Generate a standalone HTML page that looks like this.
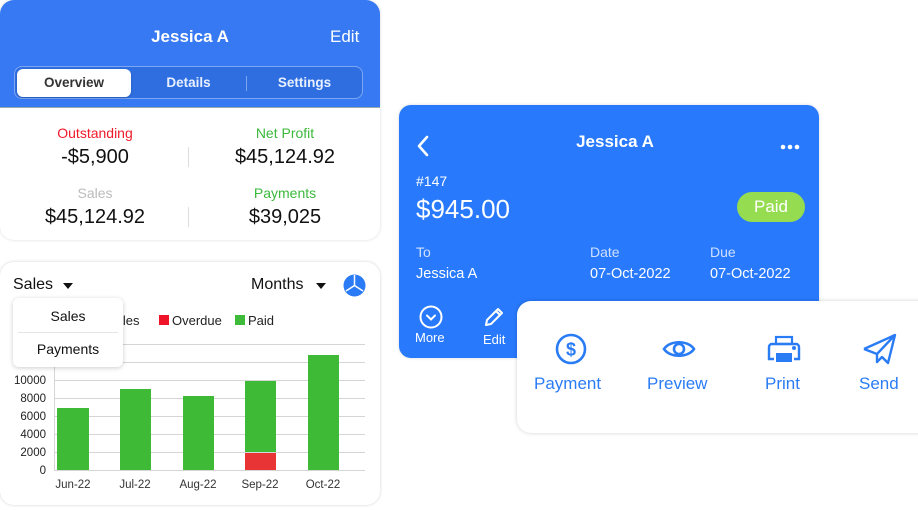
<!DOCTYPE html>
<html><head><meta charset="utf-8">
<style>
*{margin:0;padding:0;box-sizing:border-box}
body{width:918px;height:510px;background:#fff;font-family:"Liberation Sans",sans-serif;position:relative;overflow:hidden}
.abs{position:absolute}
.c{text-align:center}
</style></head><body>

<!-- Top-left card -->
<div class="abs" style="left:0;top:0;width:380px;height:240px;border-radius:14px;box-shadow:0 0 3px rgba(0,0,0,.15);overflow:hidden;background:#fff">
  <div class="abs" style="left:0;top:0;width:380px;height:108px;background:#3679f2;border-bottom:1px solid #9aa">
    <div class="abs c" style="left:0;width:380px;top:27px;color:#fff;font-size:17px;font-weight:bold">Jessica A</div>
    <div class="abs" style="left:330px;top:27px;color:#fff;font-size:17px">Edit</div>
    <div class="abs" style="left:14px;top:66px;width:349px;height:33px;border-radius:8px;background:#2e6ee0;border:1px solid #7da6f3"></div>
    <div class="abs c" style="left:17px;top:69px;width:114px;height:28px;border-radius:6px;background:#fff;color:#333;font-size:13.5px;font-weight:bold;line-height:28px;box-shadow:0 1px 2px rgba(0,0,0,.2)">Overview</div>
    <div class="abs c" style="left:131px;top:69px;width:115px;line-height:28px;color:#e8f0ff;font-size:13.5px;font-weight:bold">Details</div>
    <div class="abs" style="left:246px;top:76px;width:1px;height:15px;background:#7da6f3"></div>
    <div class="abs c" style="left:247px;top:69px;width:115px;line-height:28px;color:#e8f0ff;font-size:13.5px;font-weight:bold">Settings</div>
  </div>
  <div class="abs c" style="left:0;width:190px;top:125px;color:#f01a2a;font-size:14px">Outstanding</div>
  <div class="abs c" style="left:0;width:190px;top:146px;color:#111;font-size:20px">-$5,900</div>
  <div class="abs c" style="left:190px;width:190px;top:125px;color:#3cb83c;font-size:14px">Net Profit</div>
  <div class="abs c" style="left:190px;width:190px;top:146px;color:#111;font-size:20px">$45,124.92</div>
  <div class="abs" style="left:188px;top:147px;width:1px;height:20px;background:#ddd"></div>
  <div class="abs c" style="left:0;width:190px;top:185px;color:#bbb;font-size:14px">Sales</div>
  <div class="abs c" style="left:0;width:190px;top:206px;color:#111;font-size:20px">$45,124.92</div>
  <div class="abs c" style="left:190px;width:190px;top:185px;color:#3cb83c;font-size:14px">Payments</div>
  <div class="abs c" style="left:190px;width:190px;top:206px;color:#111;font-size:20px">$39,025</div>
  <div class="abs" style="left:188px;top:207px;width:1px;height:20px;background:#ddd"></div>
</div>

<!-- Chart card -->
<div class="abs" style="left:0;top:262px;width:380px;height:243px;border-radius:14px;box-shadow:0 0 3px rgba(0,0,0,.18);background:#fff">
  <div class="abs" style="left:13px;top:14px;font-size:16px;color:#111">Sales</div>
  <svg class="abs" style="left:62px;top:20px" width="12" height="8"><path d="M1 1h10L6 7z" fill="#111"/></svg>
  <div class="abs" style="left:251px;top:14px;font-size:16px;color:#111">Months</div>
  <svg class="abs" style="left:315px;top:20px" width="12" height="8"><path d="M1 1h10L6 7z" fill="#111"/></svg>
  <svg class="abs" style="left:343px;top:12px" width="23" height="23"><circle cx="11.5" cy="11.5" r="11" fill="#2a7bf5"/><path d="M11.5 11.5V1M11.5 11.5L3 17M11.5 11.5L20 17" stroke="#fff" stroke-width="1.5"/></svg>
</div>

<svg class="abs" style="left:0;top:300px" width="380" height="200" font-family="Liberation Sans, sans-serif">
  <text x="107" y="25" font-size="13" fill="#222">Sales</text>
  <rect x="159" y="15" width="10" height="10" fill="#f0142a"/>
  <text x="172" y="25" font-size="13" fill="#222">Overdue</text>
  <rect x="235" y="15" width="10" height="10" fill="#3cba38"/>
  <text x="248" y="25" font-size="13" fill="#222">Paid</text>
  <g stroke="#d5d5d5" stroke-width="1">
    <line x1="54" x2="365" y1="44.5" y2="44.5"/><line x1="54" x2="365" y1="62.5" y2="62.5"/>
    <line x1="54" x2="365" y1="80.5" y2="80.5"/><line x1="54" x2="365" y1="98.5" y2="98.5"/>
    <line x1="54" x2="365" y1="116.5" y2="116.5"/><line x1="54" x2="365" y1="134.5" y2="134.5"/>
    <line x1="54" x2="365" y1="152.5" y2="152.5"/><line x1="54" x2="365" y1="170.5" y2="170.5"/>
    <line x1="54.5" x2="54.5" y1="44" y2="171"/>
  </g>
  <g font-size="11.5" fill="#222" text-anchor="end">
    <text x="46" y="84">10000</text><text x="46" y="102">8000</text><text x="46" y="120">6000</text>
    <text x="46" y="138">4000</text><text x="46" y="156">2000</text><text x="46" y="174">0</text>
  </g>
  <g fill="#3eba37">
    <rect x="57" y="108" width="32" height="62"/>
    <rect x="120" y="89" width="31" height="81"/>
    <rect x="183" y="96" width="31" height="74"/>
    <rect x="245" y="81" width="31" height="71"/>
    <rect x="308" y="55" width="31" height="115"/>
  </g>
  <rect x="245" y="153" width="31" height="17" fill="#e83434"/>
  <g font-size="11.5" fill="#333" text-anchor="middle">
    <text x="73" y="188">Jun-22</text><text x="135" y="188">Jul-22</text><text x="198" y="188">Aug-22</text>
    <text x="260" y="188">Sep-22</text><text x="323" y="188">Oct-22</text>
  </g>
</svg>

<!-- dropdown -->
<div class="abs" style="left:13px;top:298px;width:110px;height:69px;background:#fff;border-radius:6px;box-shadow:0 1px 5px rgba(0,0,0,.2)">
  <div class="abs c" style="left:0;width:110px;top:10px;font-size:14px;color:#111">Sales</div>
  <div class="abs" style="left:5px;top:34px;width:100px;height:1px;background:#e5e5e5"></div>
  <div class="abs c" style="left:0;width:110px;top:43px;font-size:14px;color:#111">Payments</div>
</div>

<!-- Invoice card -->
<div class="abs" style="left:399px;top:105px;width:420px;height:253px;background:#2879fc;border-radius:12px;box-shadow:0 0 3px rgba(0,0,0,.15)">
  <svg class="abs" style="left:17px;top:30px" width="14" height="22"><path d="M11 2L3 11l8 9" stroke="#fff" stroke-width="2.6" fill="none" stroke-linecap="round" stroke-linejoin="round"/></svg>
  <div class="abs c" style="left:0;width:432px;top:27px;font-size:17px;font-weight:bold;color:#fff">Jessica A</div>
  <svg class="abs" style="left:381px;top:39px" width="20" height="6"><circle cx="3" cy="3" r="2.3" fill="#fff"/><circle cx="10" cy="3" r="2.3" fill="#fff"/><circle cx="17" cy="3" r="2.3" fill="#fff"/></svg>
  <div class="abs" style="left:17px;top:68px;font-size:14px;color:#fff">#147</div>
  <div class="abs" style="left:17px;top:89px;font-size:26px;color:#fff">$945.00</div>
  <div class="abs c" style="left:338px;top:87px;width:68px;height:30px;border-radius:15px;background:#95dc50;color:#fff;font-size:17px;line-height:30px">Paid</div>
  <div class="abs" style="left:17px;top:139px;font-size:14px;color:#cfe0ff">To</div>
  <div class="abs" style="left:17px;top:161px;font-size:14.5px;color:#fff">Jessica A</div>
  <div class="abs" style="left:191px;top:139px;font-size:14px;color:#cfe0ff">Date</div>
  <div class="abs" style="left:191px;top:161px;font-size:14.5px;color:#fff">07-Oct-2022</div>
  <div class="abs" style="left:311px;top:139px;font-size:14px;color:#cfe0ff">Due</div>
  <div class="abs" style="left:311px;top:161px;font-size:14.5px;color:#fff">07-Oct-2022</div>
  <svg class="abs" style="left:20px;top:200px" width="24" height="24"><circle cx="12" cy="12" r="10.5" stroke="#fff" stroke-width="2" fill="none"/><path d="M8 10.5l4 4 4-4" stroke="#fff" stroke-width="2" fill="none" stroke-linecap="round"/></svg>
  <div class="abs" style="left:16px;top:225px;font-size:13px;color:#fff">More</div>
  <svg class="abs" style="left:84px;top:200px" width="22" height="24"><path d="M3 20l1-5L15 4l4 4L8 19z M13 6l4 4" stroke="#fff" stroke-width="2" fill="none" stroke-linejoin="round"/></svg>
  <div class="abs" style="left:84px;top:227px;font-size:13px;color:#fff">Edit</div>
</div>

<!-- action card -->
<div class="abs" style="left:517px;top:301px;width:420px;height:132px;background:#fff;border-radius:14px;box-shadow:0 0 4px rgba(0,0,0,.18)">
  <svg class="abs" style="left:38px;top:32px" width="32" height="32"><circle cx="16" cy="16" r="14" stroke="#2a7cf5" stroke-width="2.6" fill="none"/><text x="16" y="22.5" text-anchor="middle" font-size="18" font-weight="bold" fill="#2a7cf5" font-family="Liberation Sans,sans-serif">$</text></svg>
  <div class="abs" style="left:17px;top:73px;font-size:17px;color:#2a7cf5">Payment</div>
  <svg class="abs" style="left:145px;top:35px" width="34" height="26"><path d="M2 13C8 4 26 4 32 13C26 22 8 22 2 13z" stroke="#2a7cf5" stroke-width="2.6" fill="none"/><circle cx="17" cy="13" r="5" stroke="#2a7cf5" stroke-width="2.6" fill="none"/></svg>
  <div class="abs" style="left:130px;top:73px;font-size:17px;color:#2a7cf5">Preview</div>
  <svg class="abs" style="left:249px;top:34px" width="36" height="30"><rect x="10" y="2" width="16" height="7" stroke="#2a7cf5" stroke-width="2.2" fill="none"/><path d="M8 24H3V12a3 3 0 0 1 3-3h24a3 3 0 0 1 3 3v12h-5" stroke="#2a7cf5" stroke-width="2.4" fill="none"/><rect x="10" y="18" width="16" height="9" fill="#2a7cf5"/><circle cx="28" cy="13" r="2" fill="#2a7cf5"/></svg>
  <div class="abs" style="left:248px;top:73px;font-size:17px;color:#2a7cf5">Print</div>
  <svg class="abs" style="left:345px;top:32px" width="36" height="32"><path d="M2 16L33 2L26 30L20 24L15 29L15 21L33 2M15 21L2 16" stroke="#2a7cf5" stroke-width="2.4" fill="none" stroke-linejoin="round"/></svg>
  <div class="abs" style="left:342px;top:73px;font-size:17px;color:#2a7cf5">Send</div>
</div>

</body></html>
